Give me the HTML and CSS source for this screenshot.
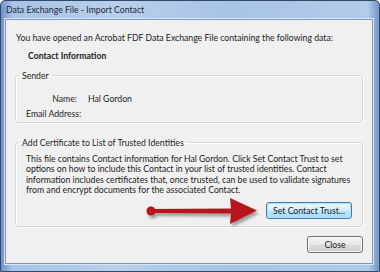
FILE: index.html
```html
<!DOCTYPE html>
<html lang="en">

<head>
    <meta charset="UTF-8">
    <title>Data Exchange File - Import Contact</title>
    <link rel="stylesheet" href="styles.css">
</head>

<body>
    <div class="window">
        <div class="titlebar">Data Exchange File - Import Contact</div>
        <div class="client">
            <p class="intro">You have opened an Acrobat FDF Data Exchange File containing the following data:</p>
            <p class="heading">Contact Information</p>

            <fieldset class="group sender">
                <legend>Sender</legend>
                <div class="field name-row">
                    <span class="field-label">Name:</span>
                    <span class="field-value">Hal Gordon</span>
                </div>
                <div class="field email-row">
                    <span class="field-label">Email Address:</span>
                </div>
            </fieldset>

            <fieldset class="group trust">
                <legend>Add Certificate to List of Trusted Identities</legend>
                <p class="info">This file contains Contact information for Hal Gordon. Click Set Contact Trust to set
                    options on how to include this Contact in your list of trusted identities. Contact
                    information includes certificates that, once trusted, can be used to validate signatures
                    from and encrypt documents for the associated Contact.</p>
                <div class="trust-row">
                    <button class="btn btn-focus">Set Contact Trust...</button>
                </div>
                <svg class="arrow" width="118" height="36" viewBox="0 0 118 36">
                    <defs>
                        <filter id="shadow" x="-20%" y="-40%" width="140%" height="180%">
                            <feDropShadow dx="2" dy="3" stdDeviation="1.8" flood-color="#000" flood-opacity="0.35"/>
                        </filter>
                    </defs>
                    <g filter="url(#shadow)">
                        <circle cx="5" cy="19" r="4.5" fill="#b5121b"/>
                        <path d="M5 17 L85 16.5 L84 6 L111 18.5 L84 32 L85 21.5 L5 21 Z" fill="#b5121b"/>
                    </g>
                </svg>
            </fieldset>

            <div class="footer">
                <button class="btn btn-close">Close</button>
            </div>
        </div>
    </div>
</body>

</html>
```

FILE: styles.css
```css
body {
    margin: 0;
    font-family: Lato, sans-serif;
    font-size: 8.7px;
    line-height: 11px;
    color: #1c1c1c;
}

.window {
    width: 380px;
    height: 272px;
    box-sizing: border-box;
    border: 1px solid #34496a;
    border-radius: 5px 5px 0 0;
    background: linear-gradient(90deg, #6f92c6 0%, #a8c3e6 3%, #b8cfec 30%, #a9c3e6 60%, #b3cbea 97%, #7695c6 100%);
    display: flex;
    flex-direction: column;
}

.titlebar {
    height: 18px;
    line-height: 18px;
    padding-left: 5px;
    color: #1e2836;
}

.client {
    flex: 1;
    margin: 0 6px 7px 4px;
    border: 1px solid #8197b5;
    box-shadow: 0 0 0 1px #dbe6f4;
    background: #f0f0f0;
}

p {
    margin: 0;
}

.intro {
    margin: 12px 0 0 10px;
}

.heading {
    margin: 7px 0 0 22px;
    font-weight: bold;
}

.group {
    margin: 9px 9px 0 9px;
    border: 1px solid #d8d8d8;
    border-radius: 3px;
    box-shadow: 1px 1px 0 #fff inset, 1px 1px 0 #fff;
    padding: 0;
}

.group legend {
    padding: 0 3px 0 3px;
    margin-left: 3px;
}

.sender {
    height: 51px;
}

.field {
    display: flex;
}

.name-row {
    margin-top: 12px;
}

.email-row {
    margin-top: 4px;
}

.field-label {
    width: 61px;
    text-align: right;
}

.email-row .field-label {
    width: auto;
    padding-left: 10px;
    text-align: left;
}

.field-value {
    margin-left: 11px;
}

.trust {
    margin-top: 14px;
    height: 88px;
    position: relative;
}

.info {
    margin: 6px 6px 0 10px;
    line-height: 10.4px;
}

.trust-row {
    display: flex;
    justify-content: flex-end;
    margin: 6px 10px 0 0;
}

.btn {
    font-family: Lato, sans-serif;
    font-size: 8.7px;
    color: #1c1c1c;
    height: 17px;
    padding: 0;
    border: 1px solid #707070;
    border-radius: 3px;
    background: linear-gradient(180deg, #f2f2f2 0%, #ebebeb 48%, #dddddd 52%, #cfcfcf 100%);
    box-shadow: 0 0 0 1px #fcfcfc inset;
}

.btn-focus {
    width: 86px;
    border-color: #3c7fb1;
    background: linear-gradient(180deg, #eaf6fd 0%, #d9f0fc 48%, #bee6fd 52%, #a7d9f5 100%);
    box-shadow: 0 0 0 1px #b6e1f9 inset;
}

.arrow {
    position: absolute;
    left: 130px;
    top: 44px;
}

.footer {
    display: flex;
    justify-content: flex-end;
    margin: 9px 9px 0 0;
}

.btn-close {
    width: 56px;
}
```
